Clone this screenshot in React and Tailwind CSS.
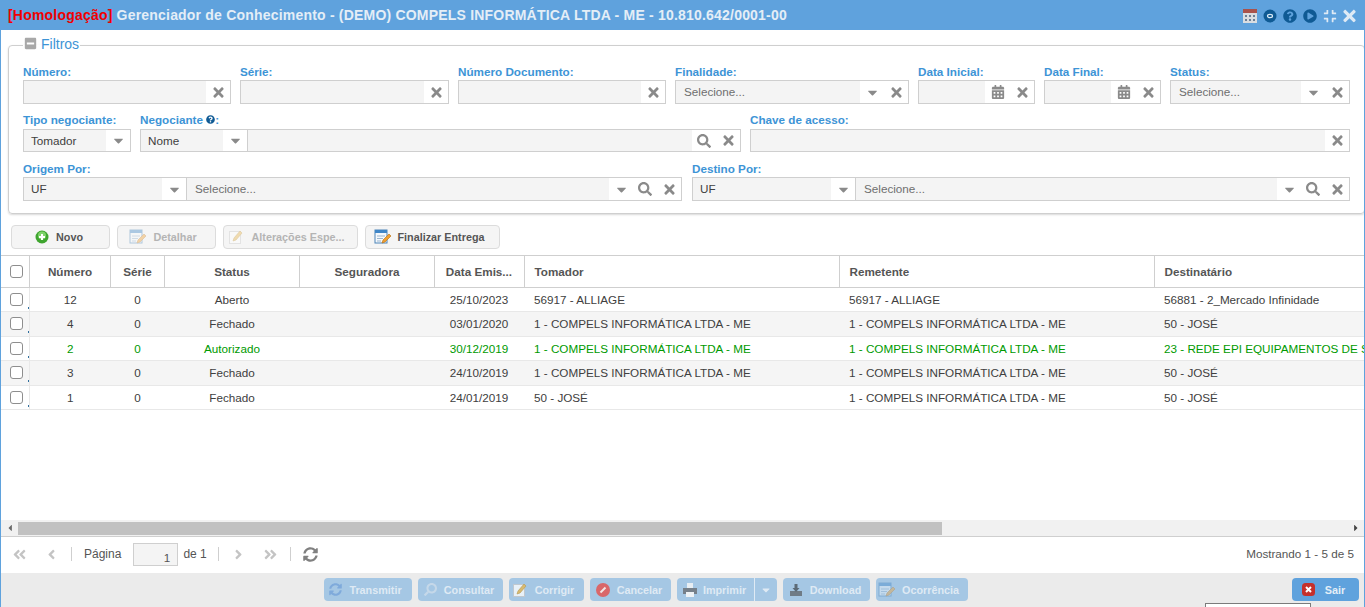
import React from "react";
import {
  FaTimes,
  FaCalendarAlt,
  FaSearch,
  FaCaretDown,
  FaQuestionCircle,
  FaPlayCircle,
  FaCompress,
  FaAngleDoubleLeft,
  FaAngleDoubleRight,
  FaAngleLeft,
  FaAngleRight,
  FaSyncAlt,
  FaMinusSquare,
  FaCaretLeft,
  FaCaretRight,
} from "react-icons/fa";

const rows = [
  { numero: "12", status: "Aberto", data: "25/10/2023", tomador: "56917 - ALLIAGE", remetente: "56917 - ALLIAGE", destinatario: "56881 - 2_Mercado Infinidade" },
  { numero: "4", status: "Fechado", data: "03/01/2020", tomador: "1 - COMPELS INFORMÁTICA LTDA - ME", remetente: "1 - COMPELS INFORMÁTICA LTDA - ME", destinatario: "50 - JOSÉ", alt: true },
  { numero: "2", status: "Autorizado", data: "30/12/2019", tomador: "1 - COMPELS INFORMÁTICA LTDA - ME", remetente: "1 - COMPELS INFORMÁTICA LTDA - ME", destinatario: "23 - REDE EPI EQUIPAMENTOS DE SEGURANCA", green: true },
  { numero: "3", status: "Fechado", data: "24/10/2019", tomador: "1 - COMPELS INFORMÁTICA LTDA - ME", remetente: "1 - COMPELS INFORMÁTICA LTDA - ME", destinatario: "50 - JOSÉ", alt: true },
  { numero: "1", status: "Fechado", data: "24/01/2019", tomador: "50 - JOSÉ", remetente: "1 - COMPELS INFORMÁTICA LTDA - ME", destinatario: "50 - JOSÉ" },
];

function Field({ label, labelClass = "h-[15px]", children }) {
  return (
    <div className="flex min-w-0 flex-col">
      <label className={`text-[11.7px] leading-[13px] font-bold text-[#3d94d6] ${labelClass}`}>{label}</label>
      {children}
    </div>
  );
}

function Trigger({ children, w = "w-6" }) {
  return <span className={`flex h-full shrink-0 items-center justify-center bg-white text-[#8a8a8a] ${w}`}>{children}</span>;
}

const Clear = () => (
  <Trigger>
    <FaTimes className="h-[15px] w-[15px]" />
  </Trigger>
);
const Caret = () => (
  <Trigger>
    <FaCaretDown className="h-[15px] w-[15px]" />
  </Trigger>
);
const Calendar = () => (
  <Trigger w="w-[25px]">
    <FaCalendarAlt className="h-[14px] w-[14px]" />
  </Trigger>
);
const Search = () => (
  <Trigger>
    <FaSearch className="h-[14px] w-[14px]" />
  </Trigger>
);

function Box({ value, placeholder, children, className = "", height = "h-6" }) {
  return (
    <div className={`flex border border-[#cfcfcf] ${height} ${className}`}>
      <span className={`flex flex-1 items-center truncate bg-[#f4f4f4] text-[11.7px] ${placeholder ? "px-[8px] text-[#6f6f6f]" : "px-[7px] text-[#404040]"}`}>
        {value || placeholder}
      </span>
      {children}
    </div>
  );
}

function EditIcon({ faded }) {
  return (
    <svg width="17" height="16" viewBox="0 0 17 16" className={faded ? "opacity-40" : ""}>
      <rect x="1" y="1" width="12" height="13" fill="#f4f8fc" stroke="#4d84b8" />
      <rect x="1" y="1" width="12" height="3" fill="#3f86c8" />
      <path d="M3 7h8M3 9.500h6M3 12h4" stroke="#9ab5cf" />
      <path d="M8 14l1-3 6-6 2 2-6 6z" fill="#f0a030" stroke="#b56d12" strokeWidth="0.6" />
    </svg>
  );
}

function PencilIcon({ faded }) {
  return (
    <svg width="16" height="16" viewBox="0 0 16 16" className={faded ? "opacity-40" : "opacity-75"}>
      <rect x="1.500" y="2.500" width="11" height="12" fill="#fff" stroke="#c9c9c9" />
      <path d="M5 12l1-3 6-7 2 2-6 7z" fill="#eab64a" stroke="#b98a24" strokeWidth="0.6" />
    </svg>
  );
}

function PlusIcon() {
  return (
    <svg width="14" height="14" viewBox="0 0 14 14">
      <circle cx="7" cy="7" r="6.500" fill="#3fa52f" />
      <circle cx="7" cy="5.500" r="4" fill="#7fd36b" />
      <path d="M7 4v6M4 7h6" stroke="#fff" strokeWidth="2" />
    </svg>
  );
}

function ToolButton({ icon, label, width, disabled, pad = "pr-[3px]" }) {
  return (
    <button className={`flex h-[24px] items-center justify-center gap-[7px] rounded-sm border border-[#dcdcdc] bg-[#f5f5f5] text-[10.8px] font-bold ${disabled ? "text-[#b4b4b4]" : "text-[#555]"} ${pad} ${width}`}>
      {icon}
      <span>{label}</span>
    </button>
  );
}

function ActionButton({ icon, label, width, pad = "pr-[3px]" }) {
  return (
    <button className={`flex h-[23px] items-center justify-center gap-[7px] rounded-sm bg-[#a5c7e4] text-[10.8px] font-bold text-[#dfeaf4] ${pad} ${width}`}>
      {icon}
      <span className="pt-[1px]">{label}</span>
    </button>
  );
}

function Check() {
  return <span className="block h-[13px] w-[13px] rounded-[3px] border border-[#8e8e8e] bg-white" />;
}

export default function App() {
  return (
    <div className="flex h-screen flex-col overflow-hidden border-x border-t border-[#5fa2dd] bg-white font-['Liberation_Sans',Arial,sans-serif]">
      {/* Title */}
      <header className="flex h-[29px] shrink-0 items-center justify-between bg-[#5fa2dd] pr-[8px] pl-[7px]">
        <h1 className="pb-[1px] text-sm font-bold tracking-[0.2px] whitespace-nowrap text-[#e4eef7]">
          <span className="text-[#f00000]">[Homologação]</span> Gerenciador de Conhecimento - (DEMO) COMPELS INFORMÁTICA LTDA - ME - 10.810.642/0001-00
        </h1>
        <div className="flex items-center gap-[6px]">
          <svg width="14" height="14" viewBox="0 0 14 14">
            <rect x="0" y="0" width="14" height="14" fill="#d9dde1" />
            <rect x="0" y="0" width="14" height="4" fill="#a9524b" />
            <path d="M2 6h2v2H2zM6 6h2v2H6zM10 6h2v2h-2zM2 10h2v2H2zM6 10h2v2H6zM10 10h2v2h-2z" fill="#6b7f96" />
          </svg>
          <svg width="14" height="14" viewBox="0 0 14 14">
            <circle cx="7" cy="7" r="6.500" fill="#0f5a94" />
            <ellipse cx="7" cy="7" rx="2.500" ry="1.600" fill="none" stroke="#d9e9f5" strokeWidth="1.200" />
          </svg>
          <FaQuestionCircle className="h-[14px] w-[14px] text-[#0f5a94]" />
          <FaPlayCircle className="h-[14px] w-[14px] text-[#0f5a94]" />
          <FaCompress className="h-[14px] w-[14px] text-[#dfeaf5]" />
          <FaTimes className="h-[18px] w-[13px] text-[#dfeaf5]" />
        </div>
      </header>

      {/* Filters */}
      <fieldset className="mt-[8px] ml-[7px] shrink-0 rounded-[4px] border border-[#cfcfcf] px-[14px] pt-[13px] pb-[12px] shadow-[0_1px_2px_rgba(0,0,0,0.15)]">
        <legend className="flex h-[14px] items-start gap-[4px] px-[1px] text-sm leading-[12px] text-[#3d94d6]">
          <FaMinusSquare className="-mt-[1px] h-[13px] w-[13px] text-[#a8a8a8]" />
          Filtros
        </legend>
        <div className="grid grid-cols-[208px_209px_208px_234px_117px_117px_180px] gap-x-[9px]">
          <Field label="Número:"><Box><Clear /></Box></Field>
          <Field label="Série:"><Box><Clear /></Box></Field>
          <Field label="Número Documento:"><Box><Clear /></Box></Field>
          <Field label="Finalidade:"><Box placeholder="Selecione..."><Caret /><Clear /></Box></Field>
          <Field label="Data Inicial:"><Box><Calendar /><Clear /></Box></Field>
          <Field label="Data Final:"><Box><Calendar /><Clear /></Box></Field>
          <Field label="Status:"><Box placeholder="Selecione..."><Caret /><Clear /></Box></Field>
        </div>
        <div className="mt-[9px] grid grid-cols-[108px_601px_600px] gap-x-[9px]">
          <Field label="Tipo negociante:" labelClass="h-[16px]"><Box value="Tomador" height="h-[23px]"><Caret /></Box></Field>
          <Field
            labelClass="h-[16px]"
            label={
              <>
                Negociante <FaQuestionCircle className="inline h-[9px] w-[9px] align-baseline text-[#0f5a94]" />:
              </>
            }
          >
            <div className="flex">
              <Box value="Nome" className="w-[108px]" height="h-[23px]"><Caret /></Box>
              <Box className="flex-1 border-l-0" height="h-[23px]"><Search /><Clear /></Box>
            </div>
          </Field>
          <Field label="Chave de acesso:" labelClass="h-[16px]"><Box height="h-[23px]"><Clear /></Box></Field>
        </div>
        <div className="mt-[10px] grid grid-cols-[659px_658px] gap-x-[10px]">
          <Field label="Origem Por:">
            <div className="flex">
              <Box value="UF" className="w-[164px]"><Caret /></Box>
              <Box placeholder="Selecione..." className="flex-1 border-l-0"><Caret /><Search /><Clear /></Box>
            </div>
          </Field>
          <Field label="Destino Por:">
            <div className="flex">
              <Box value="UF" className="w-[164px]"><Caret /></Box>
              <Box placeholder="Selecione..." className="flex-1 border-l-0"><Caret /><Search /><Clear /></Box>
            </div>
          </Field>
        </div>
      </fieldset>

      {/* Toolbar */}
      <div className="flex shrink-0 gap-[7px] pt-[11px] pb-[6px] pl-[10px]">
        <ToolButton icon={<PlusIcon />} label="Novo" width="w-[99px]" />
        <ToolButton icon={<EditIcon faded />} label="Detalhar" width="w-[99px]" pad="pr-[7px]" disabled />
        <ToolButton icon={<PencilIcon faded />} label="Alterações Espe..." width="w-[135px]" pad="pr-[8px]" disabled />
        <ToolButton icon={<EditIcon />} label="Finalizar Entrega" width="w-[135px]" pad="pr-[7px]" />
      </div>

      {/* Grid */}
      <div className="min-h-0 flex-1 overflow-hidden border-t border-[#cfcfcf]">
        <table className="w-[1500px] table-fixed border-collapse text-[11.7px] text-[#404040]">
          <colgroup>
            <col className="w-[28px]" />
            <col className="w-[81px]" />
            <col className="w-[54px]" />
            <col className="w-[135px]" />
            <col className="w-[135px]" />
            <col className="w-[90px]" />
            <col className="w-[315px]" />
            <col className="w-[315px]" />
            <col />
          </colgroup>
          <thead>
            <tr className="h-[31px] border-b border-[#cfcfcf] font-bold text-[#555]">
              <th className="border-r border-[#cfcfcf] pl-[4px]"><div className="flex justify-center"><Check /></div></th>
              <th className="border-r border-[#cfcfcf] pt-[1px] pl-[1px]">Número</th>
              <th className="border-r border-[#cfcfcf] pt-[1px] pl-[1px]">Série</th>
              <th className="border-r border-[#cfcfcf] pt-[1px] pl-[1px]">Status</th>
              <th className="border-r border-[#cfcfcf] pt-[1px] pl-[1px]">Seguradora</th>
              <th className="border-r border-[#cfcfcf] pt-[1px]">Data Emis...</th>
              <th className="border-r border-[#cfcfcf] pt-[1px] pl-[10px] text-left">Tomador</th>
              <th className="border-r border-[#cfcfcf] pt-[1px] pl-[10px] text-left">Remetente</th>
              <th className="pt-[1px] pl-[10px] text-left">Destinatário</th>
            </tr>
          </thead>
          <tbody>
            {rows.map((row) => (
              <tr key={row.numero} className={`h-[24.5px] border-b border-[#e8e8e8] ${row.alt ? "bg-[#f5f5f5]" : ""} ${row.green ? "text-[#009a00]" : ""}`}>
                <td className="border-r border-[#e8e8e8] pl-[4px]">
                  <div className="relative flex justify-center">
                    <Check />
                    <span className="absolute right-0 bottom-[-3px] h-[2px] w-[1px] bg-[#2f6f9f]" />
                  </div>
                </td>
                <td className="pt-[1px] pl-[1px] text-center">{row.numero}</td>
                <td className="pt-[1px] pl-[1px] text-center">0</td>
                <td className="pt-[1px] pl-[1px] text-center">{row.status}</td>
                <td />
                <td className="pt-[1px] text-center">{row.data}</td>
                <td className="truncate pt-[1px] pl-[10px]">{row.tomador}</td>
                <td className="truncate pt-[1px] pl-[10px]">{row.remetente}</td>
                <td className="truncate pt-[1px] pl-[10px]">{row.destinatario}</td>
              </tr>
            ))}
          </tbody>
        </table>
      </div>

      {/* Horizontal scrollbar */}
      <div className="flex h-[17px] shrink-0 items-center justify-between border-b border-[#cfcfcf] bg-[#f1f1f1] text-[#6a6a6a]">
        <div className="flex h-full flex-1 items-center">
          <span className="flex w-[17px] justify-center"><FaCaretLeft className="h-[10px] w-[10px]" /></span>
          <span className="h-[13px] w-[924px] bg-[#c1c1c1]" />
        </div>
        <span className="flex w-[17px] justify-center text-[#444]"><FaCaretRight className="h-[10px] w-[10px]" /></span>
      </div>

      {/* Pagination */}
      <div className="flex h-[36px] shrink-0 items-center justify-between pr-[10px] pb-[2px] text-[11.7px] text-[#555]">
        <div className="flex items-center">
          <FaAngleDoubleLeft className="ml-[11px] h-[15px] w-[15px] text-[#c4c4c4]" />
          <FaAngleLeft className="ml-[17px] h-[15px] w-[15px] text-[#c4c4c4]" />
          <span className="ml-[12px] h-[14px] border-l border-[#cfcfcf]" />
          <span className="ml-[12px] text-xs">Página</span>
          <span className="ml-[12px] h-[23px] w-[45px] border border-[#cfcfcf] bg-[#f4f4f4] pt-[5px] pr-[7px] text-right">1</span>
          <span className="ml-[5px] text-xs">de 1</span>
          <span className="ml-[11px] h-[14px] border-l border-[#cfcfcf]" />
          <FaAngleRight className="ml-[12px] h-[15px] w-[15px] text-[#c4c4c4]" />
          <FaAngleDoubleRight className="ml-[17px] h-[15px] w-[15px] text-[#c4c4c4]" />
          <span className="ml-[12px] h-[14px] border-l border-[#cfcfcf]" />
          <FaSyncAlt className="ml-[12px] h-[15px] w-[15px] text-[#808080]" />
        </div>
        <span>Mostrando 1 - 5 de 5</span>
      </div>

      {/* Footer */}
      <footer className="relative flex h-[34px] shrink-0 items-start bg-[#ebebeb] pt-[5px] pr-[5px] pl-[323px]">
        <div className="flex gap-[6px]">
          <ActionButton label="Transmitir" width="w-[88px]" pad="pr-[5px]" icon={<FaSyncAlt className="h-[13px] w-[13px] text-[#7faadb]" />} />
          <ActionButton label="Consultar" width="w-[85px]" icon={<FaSearch className="h-[13px] w-[13px] -scale-x-100 text-[#c5d8e9]" />} />
          <ActionButton label="Corrigir" width="w-[75px]" pad="pr-[7px]" icon={<PencilIcon />} />
          <ActionButton
            label="Cancelar"
            width="w-[81px]"
            icon={
              <svg width="14" height="14" viewBox="0 0 14 14">
                <circle cx="7" cy="7" r="7" fill="#d9676a" />
                <path d="M4.500 9.500l5-5" stroke="#f3e6e6" strokeWidth="2" />
              </svg>
            }
          />
          <div className="flex h-[23px] w-[100px] rounded-sm bg-[#a5c7e4] text-[10.8px] font-bold text-[#dfeaf4]">
            <span className="flex flex-1 items-center justify-center gap-[5px] pt-[1px] pr-[3px]">
              <svg width="16" height="14" viewBox="0 0 16 14">
                <path d="M5 0h6v5H5z" fill="#e8eef3" />
                <path d="M1 5h14v6H1z" fill="#76808a" />
                <path d="M4 9h8v5H4z" fill="#eef2f5" />
              </svg>
              Imprimir
            </span>
            <span className="flex w-[23px] items-center justify-center border-l border-[#dfeaf4]">
              <FaCaretDown className="h-[12px] w-[12px]" />
            </span>
          </div>
          <ActionButton
            label="Download"
            width="w-[87px]"
            icon={
              <svg width="14" height="14" viewBox="0 0 14 14">
                <path d="M1 8h12v5H1z" fill="#6f7b86" />
                <path d="M5.500 1h3v4h2L7 9 3.500 5h2z" fill="#5c6a76" />
              </svg>
            }
          />
          <ActionButton label="Ocorrência" width="w-[92px]" pad="pr-[7px]" icon={<EditIcon faded />} />
        </div>
        <button className="ml-auto flex h-[23px] w-[67px] items-center justify-center gap-[10px] rounded-sm bg-[#5fa2dd] pr-[4px] text-[10.8px] font-bold text-[#e4eef7]">
          <svg width="13" height="13" viewBox="0 0 13 13">
            <rect width="13" height="13" rx="3.500" fill="#c4302b" />
            <path d="M4 4l5 5M9 4l-5 5" stroke="#fff" strokeWidth="2" />
          </svg>
          <span className="pt-[1px]">Sair</span>
        </button>
        <span className="absolute top-[30px] left-[1204px] h-[10px] w-[106px] border border-[#7b7b7b] bg-white" />
      </footer>
    </div>
  );
}
